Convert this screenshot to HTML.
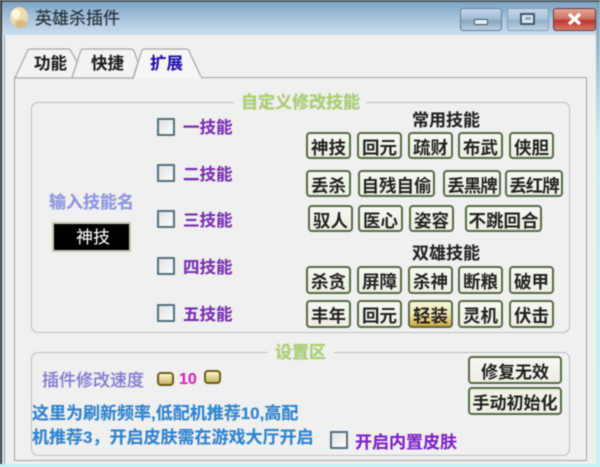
<!DOCTYPE html>
<html lang="zh">
<head>
<meta charset="utf-8">
<style>
html,body{margin:0;padding:0}
body{width:600px;height:467px;overflow:hidden;position:relative;background:#f0f0f0;font-family:"Liberation Sans","Noto Sans CJK SC",sans-serif;font-weight:bold}
div,span{position:absolute;box-sizing:border-box}
#w{left:0;top:0;width:600px;height:467px;overflow:hidden;filter:blur(.4px)}
.t{white-space:nowrap;line-height:20px;text-shadow:0 0 1px rgba(100,100,100,.35)}
.b{border:2px solid #566a44;border-radius:4px;background:linear-gradient(#f6f7f1,#eeeee3);color:#222;font-size:17.5px;line-height:28px;text-align:center;white-space:nowrap;letter-spacing:0}
.c{width:18px;height:18px;border:2px solid #54707e;background:linear-gradient(135deg,#dfe3e4,#fbfbfb);border-radius:1px}
.s{color:#7a2cb8;font-size:16.5px}
.g{border:1.5px solid #bcbcbc;border-radius:7px}
.sp{width:17px;height:14px;border:2px solid #6c5c1e;border-radius:4px;background:linear-gradient(#fff8d0,#c6b56a)}
</style>
</head>
<body>
<div id="w">
<!-- window frame -->
<div style="left:0;top:0;width:600px;height:467px;background:#d2e8f2"></div>
<div style="left:0;top:0;width:600px;height:2px;background:#4a5a60"></div>
<div style="left:0;top:0;width:2px;height:467px;background:#333"></div>
<div style="left:2px;top:2px;width:596px;height:33px;background:linear-gradient(#7fa3c6,#a9c4dc 50%,#cbdfee)"></div>
<div style="left:596px;top:2px;width:4px;height:465px;background:linear-gradient(#7fa0b8,#c9eef6 30%,#c4f2f6)"></div>
<div style="left:0;top:464px;width:600px;height:3px;background:#bdf3f5"></div>
<div style="left:4px;top:35px;width:592px;height:429px;background:#f0f0f0"></div>
<div style="left:4px;top:35px;width:1px;height:429px;background:#8aa4b8"></div>

<!-- title -->
<svg style="position:absolute;left:6px;top:6px" width="24" height="24" viewBox="0 0 24 24"><ellipse cx="13" cy="11" rx="9" ry="10" fill="#ecdcae"/><ellipse cx="10" cy="8" rx="4.5" ry="5" fill="#fbf6e2"/><ellipse cx="15" cy="18" rx="6" ry="4" fill="#d8bd82"/></svg>
<div class="t" style="left:35px;top:9px;font-size:17px;font-weight:normal;color:#26303a;text-shadow:0 0 1px rgba(30,40,50,.5)">英雄杀插件</div>

<!-- window buttons -->
<div style="left:460px;top:8px;width:42px;height:23px;border:1.5px solid #5f7f9e;border-radius:3px;background:linear-gradient(#c3d7e8,#9db8d0 50%,#87a3bc 55%,#b9d0e0)"></div>
<div style="left:474px;top:19px;width:14px;height:6px;border:1.5px solid #46586a;border-radius:1px;background:#e8f0f6"></div>
<div style="left:507px;top:8px;width:42px;height:23px;border:1.5px solid #7f9db8;border-radius:3px;background:linear-gradient(#c3d7e8,#a9c3da 50%,#93afc8 55%,#bcd3e4)"></div>
<div style="left:520px;top:13px;width:15px;height:12px;border:2px solid #46586a;border-radius:1px;background:#dbe6ee"></div>
<div style="left:525px;top:17px;width:6px;height:3px;background:#8fa8bc"></div>
<div style="left:553px;top:8px;width:43px;height:23px;border:1.5px solid #5a3c3c;border-radius:3px;background:linear-gradient(#e2a79b,#cf6d5e 48%,#b8362a 55%,#d87a6a)"></div>
<svg style="position:absolute;left:566px;top:12px" width="17" height="14" viewBox="0 0 17 14"><path d="M3 2L14 12M14 2L3 12" stroke="#fff" stroke-width="3.4"/></svg>

<!-- tab pane -->
<div style="left:14px;top:77px;width:573px;height:384px;border:1.5px solid #a4a4a4;background:#f0f0f0"></div>
<svg style="position:absolute;left:12px;top:46px" width="196" height="33" viewBox="0 0 196 33">
<path d="M3 32L16 4Q17 3 19 3H56Q58 3 59 5L65 16L60 32Z" fill="#f3f3f3" stroke="#a8a8a8" stroke-width="1.2"/>
<path d="M60 32L69 4Q70 3 72 3H119Q121 3 122 5L126 16L121 32Z" fill="#f3f3f3" stroke="#a8a8a8" stroke-width="1.2"/>
<path d="M121 33L130 4Q131 3 133 3H174Q176 3 177 5L189 31L191 32" fill="#f6f6f6" stroke="#a8a8a8" stroke-width="1.2"/>
<path d="M122 32H189" stroke="#f6f6f6" stroke-width="3"/>
</svg>
<div class="t" style="left:34px;top:54px;font-size:16.5px;color:#1c1c1c">功能</div>
<div class="t" style="left:91px;top:54px;font-size:16.5px;color:#1c1c1c">快捷</div>
<div class="t" style="left:150px;top:54px;font-size:16.5px;color:#2010b0">扩展</div>

<!-- group 1 -->
<div class="g" style="left:31px;top:102px;width:539px;height:231px"></div>
<div style="left:234px;top:94px;width:132px;height:18px;background:#f0f0f0"></div>
<div class="t" style="left:241px;top:93px;font-size:17px;color:#a9d06e">自定义修改技能</div>

<div class="t" style="left:49px;top:193px;font-size:17px;color:#8f96e6">输入技能名</div>
<div style="left:52px;top:222px;width:79px;height:30px;border:2px solid #c6c6b4;background:#000"></div>
<div class="t" style="left:76px;top:228px;font-size:17px;font-weight:normal;color:#fff">神技</div>

<div class="c" style="left:157px;top:118px"></div><div class="t s" style="left:183px;top:118px">一技能</div>
<div class="c" style="left:157px;top:164px"></div><div class="t s" style="left:183px;top:165px">二技能</div>
<div class="c" style="left:157px;top:210px"></div><div class="t s" style="left:183px;top:211px">三技能</div>
<div class="c" style="left:157px;top:257px"></div><div class="t s" style="left:183px;top:258px">四技能</div>
<div class="c" style="left:157px;top:304px"></div><div class="t s" style="left:183px;top:305px">五技能</div>

<div class="t" style="left:412px;top:111px;font-size:17px;color:#222">常用技能</div>
<div class="t" style="left:412px;top:244px;font-size:17px;color:#222">双雄技能</div>

<div class="b" style="left:306px;top:132px;width:45px;height:27px">神技</div>
<div class="b" style="left:357px;top:132px;width:45px;height:27px">回元</div>
<div class="b" style="left:408px;top:132px;width:45px;height:27px">疏财</div>
<div class="b" style="left:458px;top:132px;width:45px;height:27px">布武</div>
<div class="b" style="left:509px;top:132px;width:45px;height:27px">侠胆</div>

<div class="b" style="left:306px;top:170px;width:45px;height:27px">丢杀</div>
<div class="b" style="left:358px;top:170px;width:77px;height:27px">自残自偷</div>
<div class="b" style="left:443px;top:170px;width:58px;height:27px;letter-spacing:-1px">丢黑牌</div>
<div class="b" style="left:505px;top:170px;width:58px;height:27px;letter-spacing:-1px">丢红牌</div>

<div class="b" style="left:308px;top:205px;width:45px;height:27px">驭人</div>
<div class="b" style="left:358px;top:205px;width:45px;height:27px">医心</div>
<div class="b" style="left:409px;top:205px;width:45px;height:27px">姿容</div>
<div class="b" style="left:465px;top:205px;width:77px;height:27px">不跳回合</div>

<div class="b" style="left:306px;top:266px;width:45px;height:28px">杀贪</div>
<div class="b" style="left:357px;top:266px;width:45px;height:28px">屏障</div>
<div class="b" style="left:408px;top:266px;width:45px;height:28px">杀神</div>
<div class="b" style="left:458px;top:266px;width:45px;height:28px">断粮</div>
<div class="b" style="left:509px;top:266px;width:45px;height:28px">破甲</div>

<div class="b" style="left:306px;top:300px;width:45px;height:28px">丰年</div>
<div class="b" style="left:357px;top:300px;width:45px;height:28px">回元</div>
<div class="b" style="left:408px;top:300px;width:45px;height:28px;background:linear-gradient(#f8f4d8,#f0e4a8 55%,#d2a83c)">轻装</div>
<div class="b" style="left:458px;top:300px;width:45px;height:28px">灵机</div>
<div class="b" style="left:509px;top:300px;width:45px;height:28px">伏击</div>

<!-- group 2 -->
<div class="g" style="left:31px;top:352px;width:539px;height:104px"></div>
<div style="left:268px;top:344px;width:66px;height:18px;background:#f0f0f0"></div>
<div class="t" style="left:275px;top:343px;font-size:17px;color:#a9d06e">设置区</div>

<div class="t" style="left:42px;top:371px;font-size:17px;font-weight:normal;color:#7f78d0;text-shadow:0 0 1px #7f78d0">插件修改速度</div>
<div class="sp" style="left:157px;top:372px"></div>
<div class="t" style="left:179px;top:370px;font-size:16px;color:#e020c0">10</div>
<div class="sp" style="left:204px;top:370px"></div>

<div class="t" style="left:32px;top:404px;font-size:17px;color:#2a84d8">这里为刷新频率,低配机推荐10,高配</div>
<div class="t" style="left:32px;top:428px;font-size:17px;color:#2a84d8">机推荐3，开启皮肤需在游戏大厅开启</div>

<div class="b" style="left:468px;top:356px;width:94px;height:28px;font-size:17px;line-height:29px">修复无效</div>
<div class="b" style="left:468px;top:387px;width:94px;height:28px;font-size:17px;line-height:29px;background:#f0f0e4">手动初始化</div>

<div class="c" style="left:330px;top:431px"></div>
<div class="t" style="left:355px;top:433px;font-size:17px;color:#8020d0">开启内置皮肤</div>
</div>
</body>
</html>
